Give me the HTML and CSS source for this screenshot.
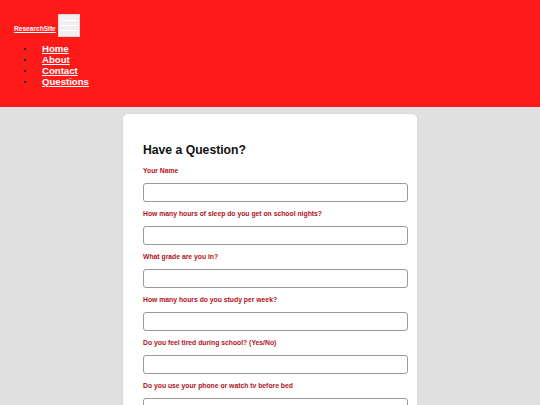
FILE: index.html
```html
<!DOCTYPE html>
<html>
<head>
<meta charset="utf-8">
<link rel="stylesheet" href="styles.css">
</head>
<body>
<header class="site-header">
  <div class="brand-row">
    <a class="brand" href="#">ResearchSite</a>
    <button class="menu-toggle" aria-label="menu">
      <span class="bar"></span><span class="bar"></span><span class="bar"></span>
    </button>
  </div>
  <ul class="nav">
    <li><a href="#">Home</a></li>
    <li><a href="#">About</a></li>
    <li><a href="#">Contact</a></li>
    <li><a href="#">Questions</a></li>
  </ul>
</header>
<main class="page">
  <section class="card">
    <h2 class="title">Have a Question?</h2>
    <form class="form">
      <label class="label">Your Name</label>
      <input class="field" type="text">
      <label class="label">How many hours of sleep do you get on school nights?</label>
      <input class="field" type="text">
      <label class="label">What grade are you in?</label>
      <input class="field" type="text">
      <label class="label">How many hours do you study per week?</label>
      <input class="field" type="text">
      <label class="label">Do you feel tired during school? (Yes/No)</label>
      <input class="field" type="text">
      <label class="label">Do you use your phone or watch tv before bed</label>
      <input class="field" type="text">
    </form>
  </section>
</main>
</body>
</html>
```
FILE: styles.css
```css
html, body {
  margin: 0;
  padding: 0;
}
body {
  background: #e0e0e0;
  font-family: "Liberation Sans", Arial, sans-serif;
}
.site-header {
  background: #ff1a1a;
  height: 107px;
  box-sizing: border-box;
  padding: 14px 0 0 14px;
}
.brand-row {
  display: flex;
  align-items: center;
}
.brand {
  color: #fff;
  font-size: 6.6px;
  font-weight: bold;
  text-decoration: underline;
  margin-top: 6px;
}
.menu-toggle {
  width: 22px;
  height: 23px;
  margin-left: 2px;
  padding: 0;
  background: #efefef;
  border: 1px solid #d6d6d6;
  display: flex;
  flex-direction: column;
  justify-content: center;
  align-items: center;
  gap: 4px;
}
.bar {
  display: block;
  width: 16px;
  height: 1px;
  background: #fff;
}
.nav {
  margin: 6px 0 0 0;
  padding: 0 0 0 10px;
  list-style: none;
}
.nav li {
  display: flex;
  align-items: center;
  height: 11px;
  font-size: 9.6px;
  line-height: 11px;
}
.nav li::before {
  content: "";
  display: block;
  width: 2px;
  height: 2px;
  background: #222;
  margin-right: 16px;
}
.nav a {
  color: #fff;
  font-weight: bold;
  text-decoration: underline;
}
.page {
  padding-top: 7px;
}
.card {
  width: 294px;
  margin: 0 auto;
  box-sizing: border-box;
  background: #fff;
  border-radius: 5px;
  padding: 20px 20px 20px 20px;
  box-shadow: 0 0 3px rgba(0,0,0,0.06);
}
.title {
  margin: 9px 0 10px 0;
  font-size: 12.2px;
  line-height: 14px;
  color: #111;
}
.form {
  display: flex;
  flex-direction: column;
}
.label {
  display: block;
  font-size: 6.8px;
  line-height: 8px;
  font-weight: bold;
  color: #b0121b;
  margin-bottom: 8px;
}
.field {
  display: block;
  width: 265px;
  height: 19px;
  box-sizing: border-box;
  margin: 0 0 8px 0;
  border: 1px solid #999;
  border-radius: 3px;
  background: #fff;
}
```
